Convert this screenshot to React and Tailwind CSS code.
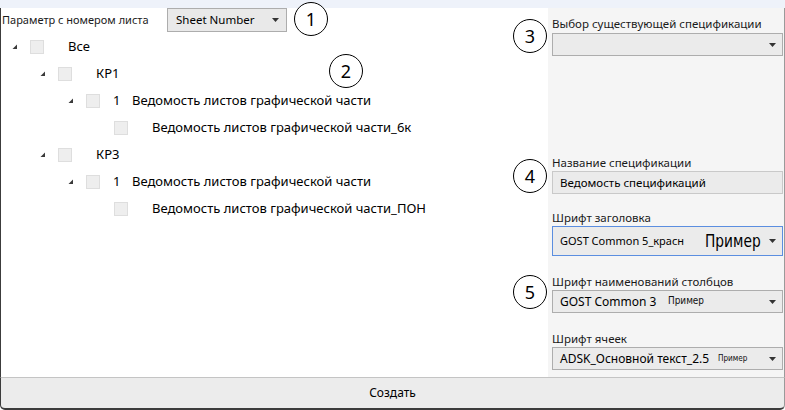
import React from 'react'

const FONT = { fontFamily: '"Noto Sans", "Open Sans", sans-serif' }
const NARROW = { fontFamily: '"DejaVu Sans Condensed", "Roboto", sans-serif' }

const TREE = [
  { level: 0, expander: true, text: 'Все' },
  { level: 1, expander: true, text: 'КР1' },
  { level: 2, expander: true, num: '1', text: 'Ведомость листов графической части' },
  { level: 3, text: 'Ведомость листов графической части_6к' },
  { level: 1, expander: true, text: 'КР3' },
  { level: 2, expander: true, num: '1', text: 'Ведомость листов графической части' },
  { level: 3, text: 'Ведомость листов графической части_ПОН' },
]

const INDENT = ['pl-[6px]', 'pl-[34px]', 'pl-[62px]', 'pl-[90px]']

function Arrow() {
  return (
    <svg width="7" height="4" viewBox="0 0 7 4" className="shrink-0">
      <path d="M0 0 H7 L3.5 4 Z" fill="#333" />
    </svg>
  )
}

function Expander() {
  return (
    <svg width="6" height="6" viewBox="0 0 6 6">
      <path d="M5 0.5 V5 H0.5 Z" fill="#3a3a3a" />
    </svg>
  )
}

function Badge({ n, className }) {
  return (
    <div className={`absolute w-[34px] h-[34px] rounded-full border border-black bg-white flex items-center justify-center text-[18px] text-black ${className}`}>
      {n}
    </div>
  )
}

function TreeRow({ row }) {
  return (
    <div className={`h-[27px] flex items-center ${INDENT[row.level]}`}>
      <div className="w-[23px] h-full flex items-center justify-start pl-[5px]">
        {row.expander && <Expander />}
      </div>
      <div className="w-[14px] h-[14px] bg-[#eeeeee] border border-[#dedede] shrink-0" />
      {row.num ? (
        <>
          <span className="w-[32px] pl-[13px] text-[13px] text-black">{row.num}</span>
          <span className="text-[13px] text-black">{row.text}</span>
        </>
      ) : (
        <span className="pl-[24px] text-[13px] text-black">{row.text}</span>
      )}
    </div>
  )
}

function Label({ children }) {
  return <div className="h-[16px] leading-[16px] text-[11.5px] text-[#1a1a1a]">{children}</div>
}

function Combo({ children, className = '' }) {
  return (
    <div className={`w-[231px] h-[23px] bg-[#ebebeb] border border-[#adadad] flex items-center pl-[7px] pr-[6px] ${className}`}>
      <div className="flex-1 flex items-center">{children}</div>
      <Arrow />
    </div>
  )
}

export default function App() {
  return (
    <div className="w-[785px] h-[410px] bg-white relative flex flex-col overflow-hidden" style={FONT}>
      <div className="h-[8px] bg-[#eef2fa] shrink-0" />

      <div className="flex-1 flex border-l border-[#3c3c3c] border-r border-r-[#9a9a9a] min-h-0">
        {/* left: parameter + tree */}
        <div className="w-[547px] bg-white flex flex-col">
          <div className="h-[24px] flex items-center">
            <span className="pl-[1px] text-[11px] text-[#1a1a1a] w-[166px]">Параметр с номером листа</span>
            <div className="w-[120px] h-[24px] bg-[#e9e9e9] border border-[#adadad] flex items-center pl-[8px] pr-[7px]">
              <span className="flex-1 text-[11.5px] text-black">Sheet Number</span>
              <Arrow />
            </div>
          </div>
          <div className="pt-[1px]">
            {TREE.map((row, i) => (
              <TreeRow key={i} row={row} />
            ))}
          </div>
        </div>

        {/* right: spec settings */}
        <div className="flex-1 bg-[#f5f5f5] pl-[4px] pt-[8px]">
          <Label>Выбор существующей спецификации</Label>
          <Combo className="mt-[1px]" />

          <div className="mt-[99px]">
            <Label>Название спецификации</Label>
            <div className="w-[231px] h-[23px] bg-[#ebebeb] border border-[#c9c9c9] flex items-center pl-[7px] text-[11.5px] text-black">
              Ведомость спецификаций
            </div>
          </div>

          <div className="mt-[16px]">
            <Label>Шрифт заголовка</Label>
            <div className="w-[231px] h-[30px] bg-[#ebebeb] border border-[#5b8ee0] flex items-center pl-[7px] pr-[6px]">
              <span className="shrink-0 text-[11px] text-black w-[145px]">GOST Common 5_красн</span>
              <div className="w-[58px] shrink-0 whitespace-nowrap">
                <span className="inline-block text-[18px] leading-none text-black scale-x-85 origin-left" style={NARROW}>Пример</span>
              </div>
              <div className="ml-auto"><Arrow /></div>
            </div>
          </div>

          <div className="mt-[18px]">
            <Label>Шрифт наименований столбцов</Label>
            <Combo>
              <span className="shrink-0 text-[12px] text-black w-[108px]">GOST Common 3</span>
              <span className="inline-block text-[11px] font-medium text-[#111] scale-x-90 origin-left" style={NARROW}>Пример</span>
            </Combo>
          </div>

          <div className="mt-[18px]">
            <Label>Шрифт ячеек</Label>
            <Combo>
              <span className="shrink-0 text-[12px] text-black w-[158px]">ADSK_Основной текст_2.5</span>
              <span className="inline-block text-[9px] font-medium text-[#111] scale-x-90 origin-left" style={NARROW}>Пример</span>
            </Combo>
          </div>
        </div>
      </div>

      {/* create button */}
      <div className="h-[33px] shrink-0 bg-[#ececec] border-t border-[#c4c4c4] border-l border-l-[#3c3c3c] border-r border-r-[#9a9a9a] border-b-2 border-b-[#3c3c3c] rounded-b-[5px] flex items-center justify-center text-[12px] text-black">
        Создать
      </div>

      <Badge n="1" className="left-[294px] top-[2px]" />
      <Badge n="2" className="left-[329px] top-[54px]" />
      <Badge n="3" className="left-[513px] top-[19px]" />
      <Badge n="4" className="left-[513px] top-[159px]" />
      <Badge n="5" className="left-[513px] top-[275px]" />
    </div>
  )
}
